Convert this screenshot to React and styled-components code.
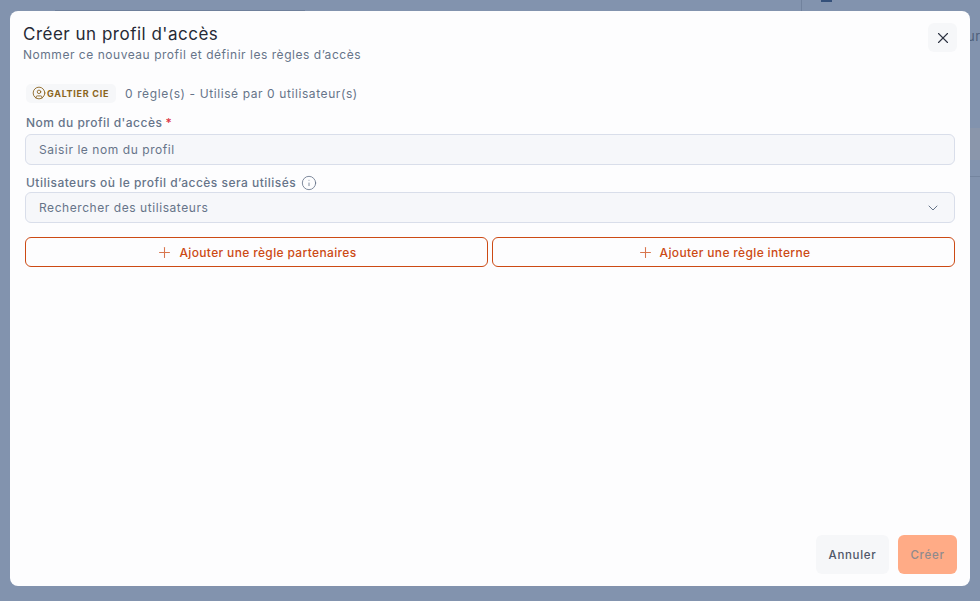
import React from 'react';
import styled, { createGlobalStyle } from 'styled-components';
import { X, ChevronDown, Plus, Info, CircleUser } from 'lucide-react';

const Global = createGlobalStyle`
  html, body { margin: 0; padding: 0; height: 100%; }
  body { font-family: Inter, "Open Sans", sans-serif; background: #8293ae; }
  * { box-sizing: border-box; }
`;

const Page = styled.div`
  position: relative;
  width: 980px;
  height: 601px;
  overflow: hidden;
  padding: 11px 23px 15px 10px;
  background: #8293ae;
`;

const BackdropTopBar = styled.div`
  position: absolute;
  left: 55px;
  top: 10px;
  width: 250px;
  height: 1px;
  background: #6f809b;
`;

const BackdropDivider = styled.div`
  position: absolute;
  left: 801px;
  top: 0;
  width: 1px;
  height: 11px;
  background: #71829d;
`;

const BackdropGlyph = styled.div`
  position: absolute;
  left: 821px;
  top: 0;
  width: 11px;
  height: 2px;
  background: #34507a;
`;

const BackdropText = styled.span`
  position: absolute;
  left: 967px;
  top: 28px;
  font-size: 13px;
  letter-spacing: 0.5px;
  color: #4e5f7a;
`;

const BackdropBand = styled.div`
  position: absolute;
  left: 970px;
  top: 128px;
  width: 10px;
  height: 32px;
  background: #8a96ab;
`;

const BackdropLine = styled.div`
  position: absolute;
  left: 970px;
  top: 176px;
  width: 10px;
  height: 1px;
  background: #74859f;
`;

const Dialog = styled.div`
  position: relative;
  display: flex;
  flex-direction: column;
  width: 960px;
  height: 575px;
  padding: 12px 13px 12px 13px;
  background: #fdfdfe;
  border-radius: 8px;
`;

const Header = styled.header`
  display: flex;
  justify-content: space-between;
  align-items: flex-start;
`;

const Title = styled.h2`
  margin: 0;
  font-size: 17px;
  line-height: 22px;
  font-weight: 400;
  letter-spacing: 0.5px;
  color: #262a36;
`;

const Subtitle = styled.p`
  margin: 2px 0 0;
  font-size: 12px;
  line-height: 16px;
  letter-spacing: 0.53px;
  color: #667489;
`;

const CloseButton = styled.button`
  display: flex;
  align-items: center;
  justify-content: center;
  width: 29px;
  height: 29px;
  margin: 0;
  padding: 0;
  border: none;
  border-radius: 6px;
  background: #f6f7f9;
  color: #2c3242;
`;

const Body = styled.div`
  display: flex;
  flex-direction: column;
  flex: 1;
  padding: 0 2px;
`;

const InfoRow = styled.div`
  display: flex;
  align-items: center;
  gap: 9px;
  margin-top: 20px;
  margin-left: 1px;
  height: 20px;
`;

const Badge = styled.span`
  display: inline-flex;
  align-items: center;
  gap: 1px;
  height: 19px;
  padding: 0 7px 0 6px;
  border-radius: 5px;
  background: #f6f7f9;
  color: #8a6420;
  font-size: 9px;
  font-weight: 700;
  letter-spacing: 0.72px;
`;

const Meta = styled.span`
  font-size: 12px;
  letter-spacing: 0.59px;
  color: #667489;
`;

const Label = styled.label`
  display: flex;
  align-items: center;
  gap: ${p => p.$gap}px;
  margin-top: ${p => p.$top}px;
  padding-left: 1px;
  font-size: 12px;
  line-height: 16px;
  font-weight: 500;
  letter-spacing: 0.48px;
  color: #667489;
`;

const Required = styled.span`
  color: #dc3545;
`;

const Field = styled.div`
  display: flex;
  align-items: center;
  justify-content: space-between;
  height: 31px;
  margin-top: ${p => p.$top}px;
  padding: 0 13px 0 13px;
  border: 1px solid #d9deea;
  border-radius: 6px;
  background: #f6f7fa;
  font-size: 12px;
  letter-spacing: 0.56px;
  color: #667489;
`;

const Actions = styled.div`
  display: grid;
  grid-template-columns: 1fr 1fr;
  gap: 4px;
  margin-top: 14px;
`;

const RuleButton = styled.button`
  display: flex;
  align-items: center;
  justify-content: center;
  gap: 6px;
  height: 30px;
  padding: 0;
  border: 1px solid #cc4a14;
  border-radius: 6px;
  background: transparent;
  color: #cc4a14;
  font-family: inherit;
  font-size: 12px;
  font-weight: 500;
  letter-spacing: 0.35px;
`;

const Footer = styled.footer`
  display: flex;
  justify-content: flex-end;
  gap: 9px;
`;

const FooterButton = styled.button`
  height: 39px;
  width: ${p => p.$w}px;
  padding: 0;
  border: none;
  border-radius: 6px;
  background: ${p => (p.$primary ? '#ffab86' : '#f6f7f9')};
  color: ${p => (p.$primary ? '#8f8a8d' : '#505668')};
  font-family: inherit;
  font-size: 11.5px;
  font-weight: 500;
  letter-spacing: 0.7px;
`;

export default function App() {
  return (
    <Page>
      <Global />
      <BackdropTopBar />
      <BackdropDivider />
      <BackdropGlyph />
      <BackdropText>urs</BackdropText>
      <BackdropBand />
      <BackdropLine />
      <Dialog>
        <Header>
          <div>
            <Title>Créer un profil d'accès</Title>
            <Subtitle>Nommer ce nouveau profil et définir les règles d’accès</Subtitle>
          </div>
          <CloseButton aria-label="Fermer"><X size={18} strokeWidth={1.5} /></CloseButton>
        </Header>
        <Body>
          <InfoRow>
            <Badge><CircleUser size={14} strokeWidth={1.5} />GALTIER CIE</Badge>
            <Meta>0 règle(s) - Utilisé par 0 utilisateur(s)</Meta>
          </InfoRow>
          <Label $top={12} $gap={3}>Nom du profil d'accès <Required>*</Required></Label>
          <Field $top={3}>Saisir le nom du profil</Field>
          <Label $top={10} $gap={5}>
            Utilisateurs où le profil d’accès sera utilisés
            <Info size={16} strokeWidth={1.25} />
          </Label>
          <Field $top={1}>
            Rechercher des utilisateurs
            <ChevronDown size={16} strokeWidth={1.5} />
          </Field>
          <Actions>
            <RuleButton><Plus size={17} strokeWidth={1.5} opacity={0.75} />Ajouter une règle partenaires</RuleButton>
            <RuleButton><Plus size={17} strokeWidth={1.5} opacity={0.75} />Ajouter une règle interne</RuleButton>
          </Actions>
        </Body>
        <Footer>
          <FooterButton $w={73}>Annuler</FooterButton>
          <FooterButton $primary $w={59}>Créer</FooterButton>
        </Footer>
      </Dialog>
    </Page>
  );
}
